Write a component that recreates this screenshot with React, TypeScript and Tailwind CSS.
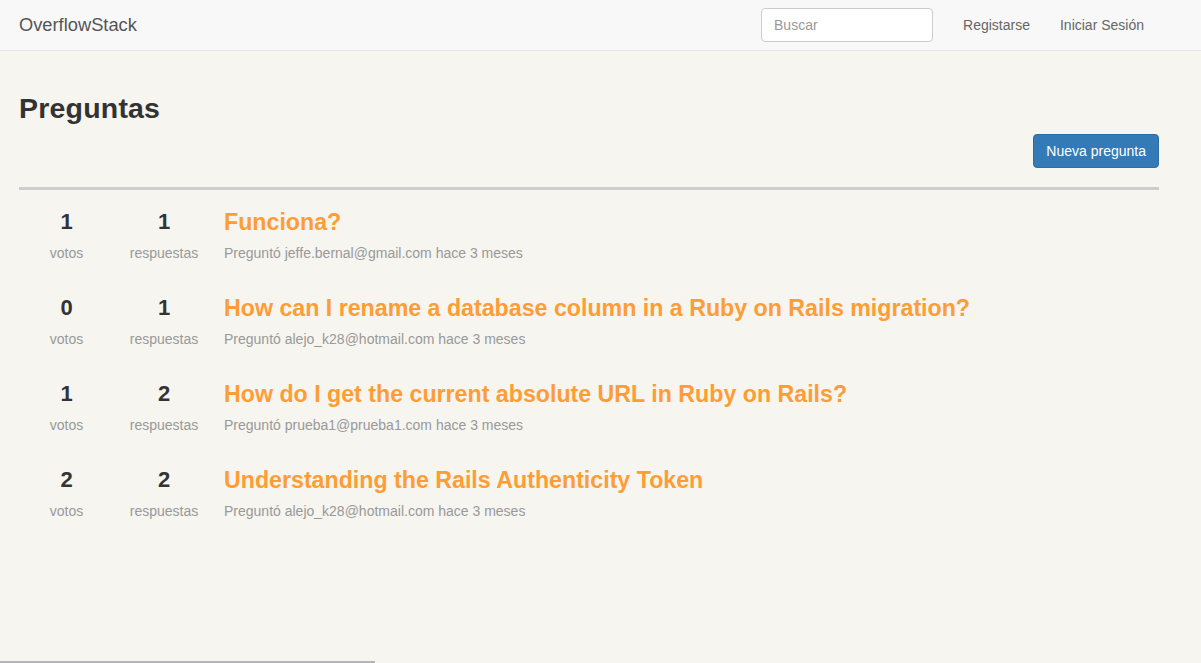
import React from "react";

const questions = [
  { votes: 1, answers: 1, title: "Funciona?", user: "jeffe.bernal@gmail.com" },
  { votes: 0, answers: 1, title: "How can I rename a database column in a Ruby on Rails migration?", user: "alejo_k28@hotmail.com" },
  { votes: 1, answers: 2, title: "How do I get the current absolute URL in Ruby on Rails?", user: "prueba1@prueba1.com" },
  { votes: 2, answers: 2, title: "Understanding the Rails Authenticity Token", user: "alejo_k28@hotmail.com" },
];

export default function App() {
  return (
    <div
      className="min-h-[663px] bg-[#f6f5f0] text-[#333] relative overflow-hidden"
      style={{ fontFamily: '"Liberation Sans", Arial, sans-serif' }}
    >
      <nav className="h-[51px] bg-[#f8f8f8] border-b border-[#e7e7e7] flex items-center pl-[19px] pr-[57px]">
        <div className="text-[18.3px] text-[#555]">OverflowStack</div>
        <div className="flex-1" />
        <div className="w-[172px] h-[34px] border border-[#ccc] rounded-[4px] bg-white flex items-center px-[12px] text-[14px] text-[#999]">
          Buscar
        </div>
        <a className="ml-[30px] text-[14px] text-[#666]">Registarse</a>
        <a className="ml-[30px] text-[14px] text-[#666]">Iniciar Sesión</a>
      </nav>

      <main className="pl-[19px] w-[1159px]">
        <h1 className="pt-[41px] text-[28.5px] font-bold leading-[32px] tracking-[0.2px] text-[#333]">Preguntas</h1>
        <div className="flex justify-end mt-[10px]">
          <button className="h-[34px] px-[12px] bg-[#337ab7] border border-[#2e6da4] rounded-[4px] text-white text-[14px]">
            Nueva pregunta
          </button>
        </div>
        <div className="mt-[19px] h-[3px] bg-[#cccccc]" />

        <div className="pt-[18px]">
          {questions.map((q, i) => (
            <div key={i} className="flex h-[86px]">
              <div className="w-[95px] flex flex-col items-center">
                <div className="text-[22px] font-bold leading-[28px] text-[#333]">{q.votes}</div>
                <div className="mt-[8px] text-[14px] text-[#999] leading-[18px]">votos</div>
              </div>
              <div className="w-[100px] flex flex-col items-center">
                <div className="text-[22px] font-bold leading-[28px] text-[#333]">{q.answers}</div>
                <div className="mt-[8px] text-[14px] text-[#999] leading-[18px]">respuestas</div>
              </div>
              <div className="ml-[10px] flex flex-col">
                <div className="text-[23.2px] font-bold leading-[28px] text-[#fe9d35]">{q.title}</div>
                <div className="mt-[8px] text-[14px] text-[#999] leading-[18px]">
                  Preguntó {q.user} hace 3 meses
                </div>
              </div>
            </div>
          ))}
        </div>
      </main>

      <div className="absolute left-0 bottom-0 w-[375px] h-[2px] bg-[#b5b5b5]" />
    </div>
  );
}
